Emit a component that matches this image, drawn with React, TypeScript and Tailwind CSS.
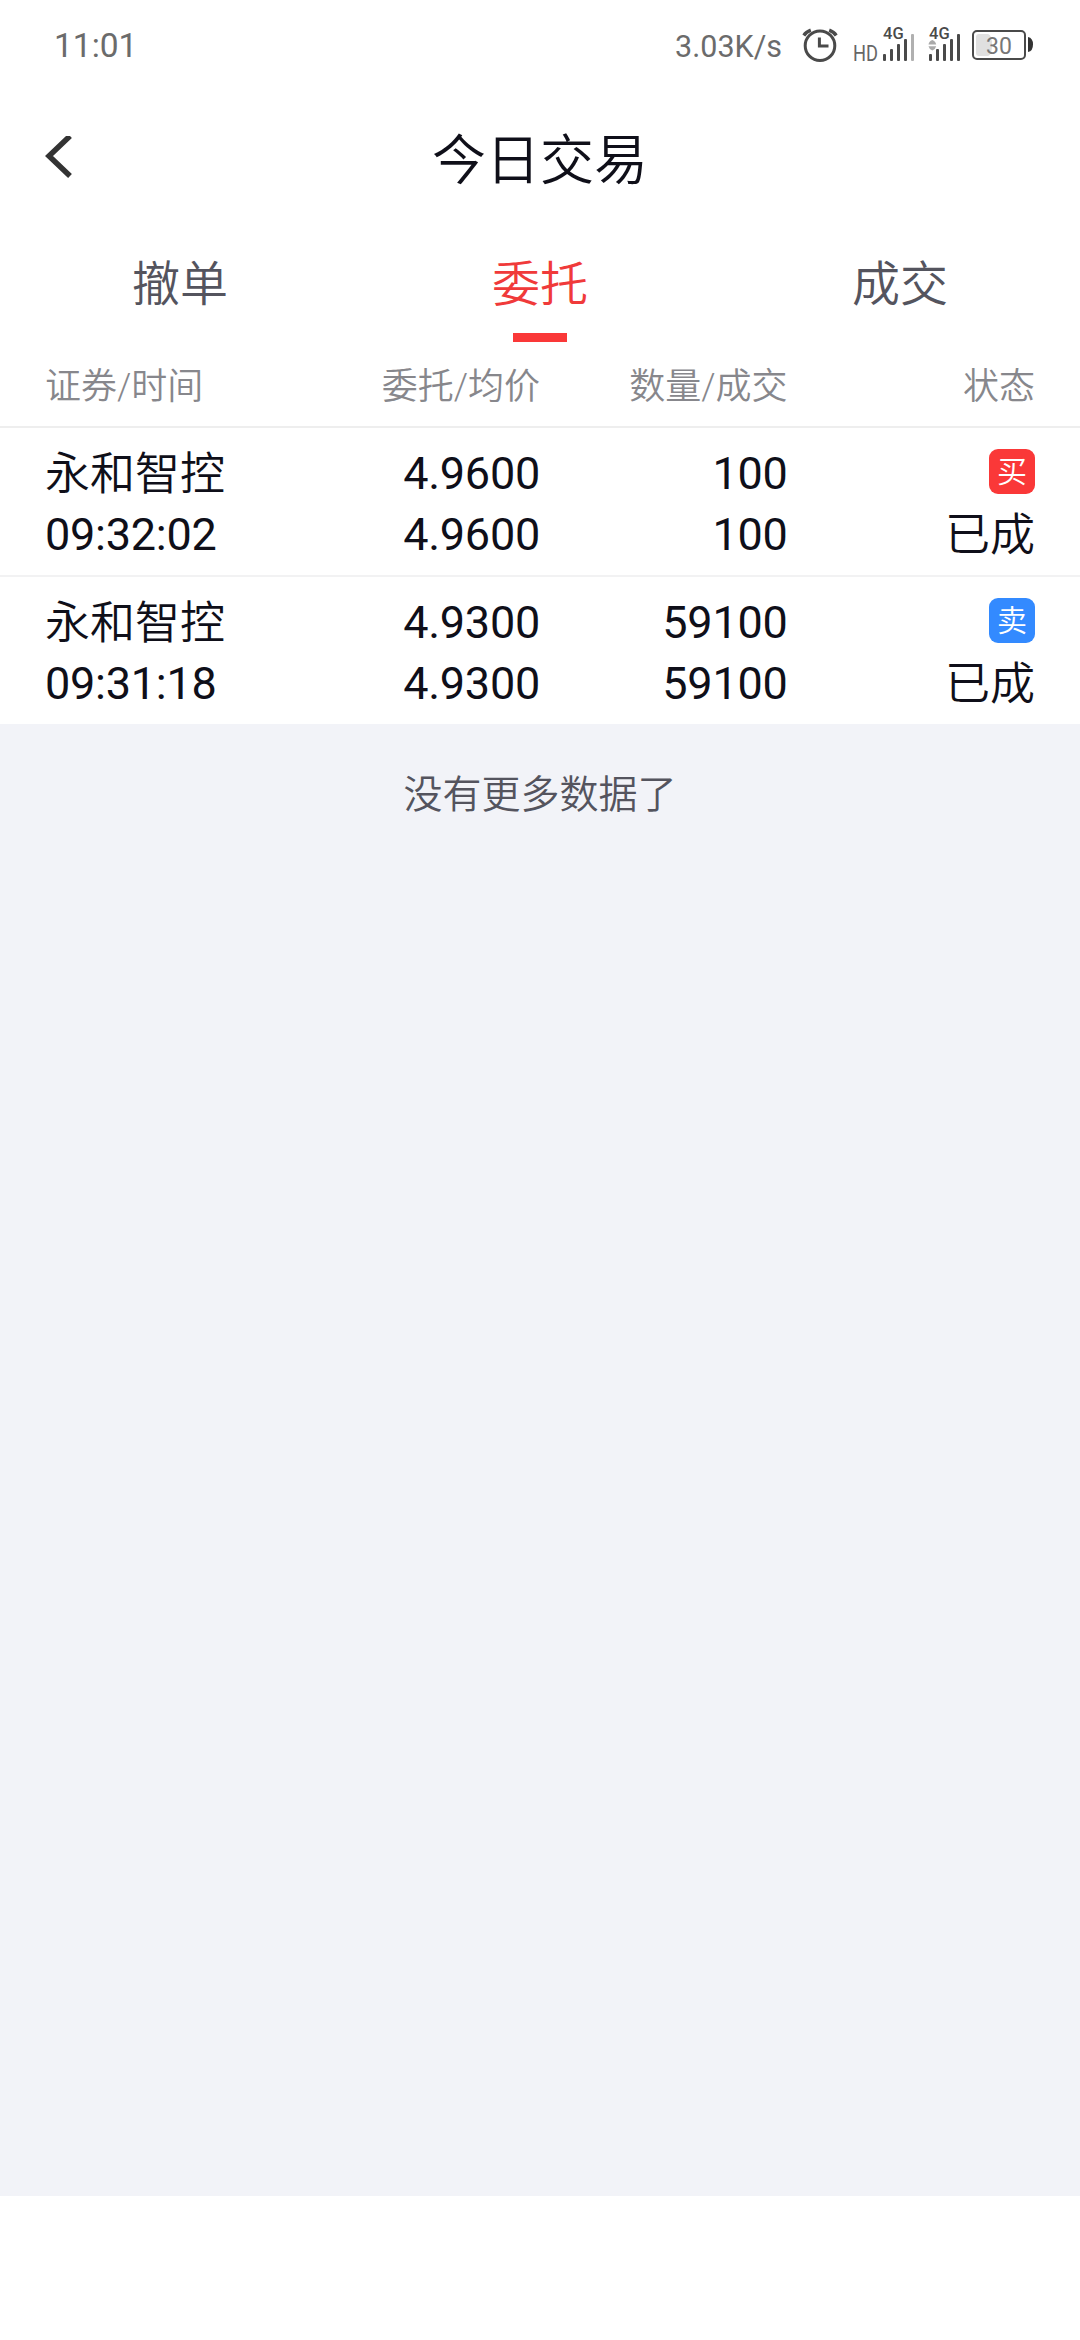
import clsx from "clsx";

type Order = {
  id: number;
  name: string;
  time: string;
  price: string;
  avgPrice: string;
  amount: string;
  filled: string;
  side: "buy" | "sell";
  status: string;
};

const tabs = ["撤单", "委托", "成交"];
const columns = ["证券/时间", "委托/均价", "数量/成交", "状态"];

const orders: Order[] = [
  {
    id: 1,
    name: "永和智控",
    time: "09:32:02",
    price: "4.9600",
    avgPrice: "4.9600",
    amount: "100",
    filled: "100",
    side: "buy",
    status: "已成",
  },
  {
    id: 2,
    name: "永和智控",
    time: "09:31:18",
    price: "4.9300",
    avgPrice: "4.9300",
    amount: "59100",
    filled: "59100",
    side: "sell",
    status: "已成",
  },
];

function AlarmIcon() {
  return (
    <svg className="h-[44px] w-[40px]" viewBox="799 24 40 44" fill="none" stroke="#4a4a4a">
      <circle cx="819" cy="45.7" r="14.8" strokeWidth="3" />
      <path d="M818.4 37.5V46H827.5" strokeWidth="3" />
      <path d="M802.8 35.5Q805 32 809.8 30.2M835.2 35.5Q833 32 828.2 30.2" strokeWidth="3.4" />
    </svg>
  );
}

function SignalHdIcon() {
  return (
    <svg className="h-[44px] w-[62px]" viewBox="852 24 62 44" fill="#4a4a4a">
      <text x="852" y="60.8" fontSize="21.5" textLength="25" lengthAdjust="spacingAndGlyphs" fill="#666">
        HD
      </text>
      <text x="882" y="38.7" fontSize="16.5" fontWeight="500">
        4G
      </text>
      <rect x="882" y="54" width="3" height="7" rx="1" />
      <rect x="889" y="49" width="3" height="12" rx="1" />
      <rect x="896" y="44" width="3" height="17" rx="1" />
      <rect x="903" y="39" width="3" height="22" rx="1" />
      <rect x="910" y="34" width="3" height="27" rx="1" fill="#b0b0b0" />
    </svg>
  );
}

function SignalIcon() {
  return (
    <svg className="h-[44px] w-[34px]" viewBox="927 24 34 44" fill="#4a4a4a">
      <text x="928" y="38.7" fontSize="16.5" fontWeight="500">
        4G
      </text>
      <path d="M927.5 44.5Q928 41 931.3 40Q934.6 41 935.2 44.5ZM927.5 46.3Q928 49 931.3 50.5Q934.6 49 935.2 46.3Z" fill="#aaa" />
      <rect x="928" y="54" width="3" height="7" rx="1" />
      <rect x="935" y="49" width="3" height="12" rx="1" />
      <rect x="942" y="44" width="3" height="17" rx="1" />
      <rect x="949" y="39" width="3" height="22" rx="1" />
      <rect x="956" y="34" width="3" height="27" rx="1" />
    </svg>
  );
}

function BatteryIcon() {
  return (
    <svg className="h-[44px] w-[63px]" viewBox="970 24 63 44">
      <rect x="972" y="31" width="52" height="28" rx="4" fill="none" stroke="#4a4a4a" strokeWidth="2" />
      <path d="M978 34H987Q991 35 991 45Q991 55 987 56H978Q975 56 975 53V37Q975 34 978 34Z" fill="#e0e0e0" />
      <text x="985" y="53.7" fontSize="23" fill="#777">
        30
      </text>
      <path d="M1027 37Q1032 38 1032 44.5Q1032 51 1027 52Z" fill="#333" />
    </svg>
  );
}

function StatusBar() {
  return (
    <div className="flex h-[92px] items-center justify-between pr-[46px] pl-[54px] font-normal text-[#6b6b6b]">
      <span className="pt-px text-[33.5px]">11:01</span>
      <div className="flex items-center">
        <span className="mr-[18px] pt-px text-[30.5px]">3.03K/s</span>
        <AlarmIcon />
        <div className="ml-[13px] flex gap-[13px]">
          <SignalHdIcon />
          <SignalIcon />
        </div>
        <div className="ml-[9px]">
          <BatteryIcon />
        </div>
      </div>
    </div>
  );
}

function OrderRow({ order }: { order: Order }) {
  return (
    <div className="box-content grid h-[132px] grid-cols-4 px-[45px] pt-[15px] text-right text-[45px] leading-[61px] font-normal">
      <div className="text-left whitespace-nowrap">
        <p className="h-[61px] pt-px font-[350]">{order.name}</p>
        <p className="tracking-[-0.25px]">{order.time}</p>
      </div>
      <div className="tracking-[-0.25px]">
        <p>{order.price}</p>
        <p>{order.avgPrice}</p>
      </div>
      <div className="tracking-[-0.25px]">
        <p>{order.amount}</p>
        <p>{order.filled}</p>
      </div>
      <div>
        <div className="flex h-[61px] justify-end pt-[6px]">
          <span
            className={clsx(
              "h-[45px] w-[46px] rounded-[9px] text-center text-[30px] leading-[46px] font-[350] text-white",
              order.side === "buy" ? "bg-[#fa3838]" : "bg-[#338aff]"
            )}
          >
            {order.side === "buy" ? "买" : "卖"}
          </span>
        </div>
        <p className="pt-px font-[350]">{order.status}</p>
      </div>
    </div>
  );
}

export default function App() {
  return (
    <div className="flex h-[2340px] w-[1080px] flex-col bg-white font-[Roboto,'Noto_Sans_CJK_SC',sans-serif] font-[350] text-[#0f0f19]">
      <StatusBar />

      {/* Title bar */}
      <div className="grid h-[136px] grid-cols-[1fr_auto_1fr] items-center">
        <svg className="ml-[42px] h-[48px] w-[32px]" viewBox="42 136 32 48" fill="none" stroke="#333" strokeWidth="5.5">
          <path d="M70 136L49 156L70 176" />
        </svg>
        <h1 className="pt-[2px] text-[54px]">今日交易</h1>
      </div>

      {/* Tabs */}
      <div className="grid h-[114px] grid-cols-3 pt-[4px] text-center text-[48px] leading-[101px]">
        {tabs.map((tab) => (
          <div key={tab} className={tab === "委托" ? "text-[#f03a3a]" : "text-[#54545e]"}>
            <p className="h-[101px] pt-[2px]">{tab}</p>
            {tab === "委托" && <div className="mx-auto h-[9px] w-[54px] bg-[#fa3838]" />}
          </div>
        ))}
      </div>

      <div className="grid h-[86px] grid-cols-4 border-b-2 border-[#eee] px-[45px] text-right text-[36px] leading-[90px] text-[#87878c]">
        {columns.map((col) => (
          <span key={col} className="first:text-left">
            {col}
          </span>
        ))}
      </div>

      {/* Order list */}
      <div className="divide-y-2 divide-[#f2f2f3]">
        {orders.map((order) => (
          <OrderRow key={order.id} order={order} />
        ))}
      </div>

      <div className="h-[1472px] bg-[#f2f3f8] pt-[41px] text-center text-[39px] leading-[60px] text-[#54545e]">
        没有更多数据了
      </div>
    </div>
  );
}
